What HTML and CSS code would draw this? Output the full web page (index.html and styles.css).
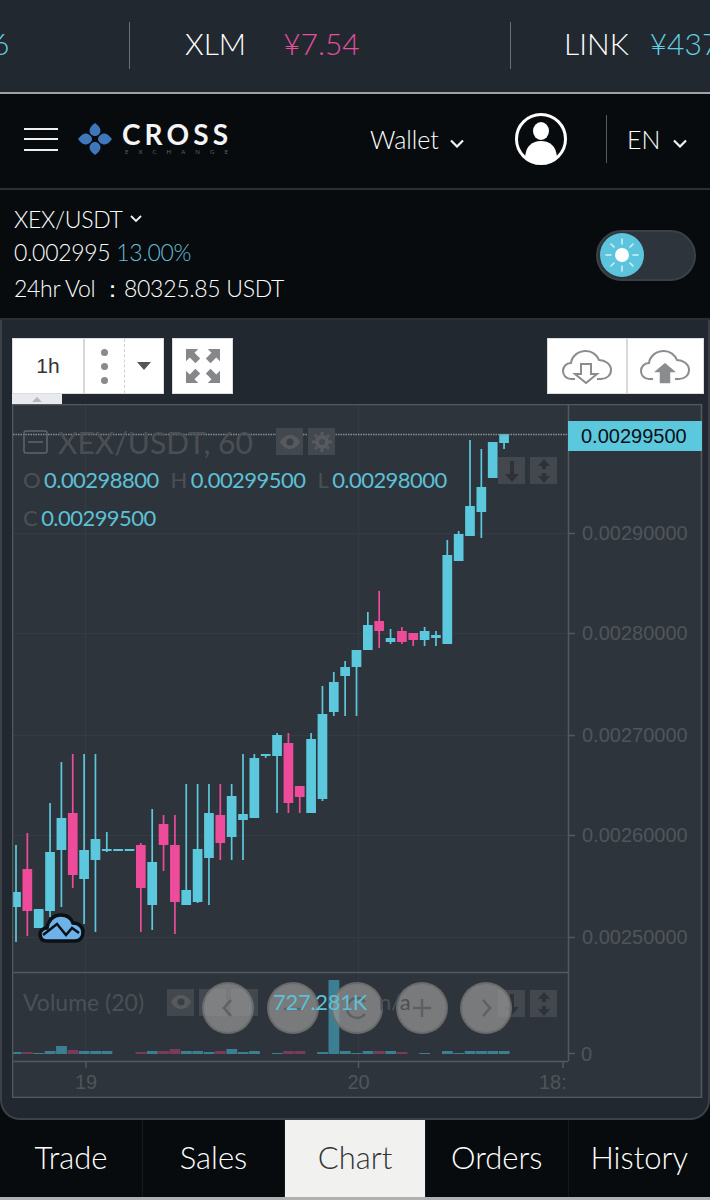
FILE: index.html
```html
<!DOCTYPE html>
<html lang="en">
<head>
    <meta charset="UTF-8">
    <meta name="viewport" content="width=device-width, initial-scale=1.0">
    <title>Cross Exchange - XEX/USDT Chart</title>
    <link rel="stylesheet" href="styles.css">
</head>
<body>

    <!-- Price ticker -->
    <div class="ticker">
        <div class="ticker-item ticker-first"><span class="up">6</span></div>
        <div class="ticker-item ticker-mid"><span class="coin">XLM</span><span class="down">¥7.54</span></div>
        <div class="ticker-item ticker-last"><span class="coin">LINK</span><span class="up">¥437</span></div>
    </div>

    <!-- Header -->
    <header class="header">
        <div class="hamburger"><span></span><span></span><span></span></div>
        <svg class="logo-mark" viewBox="0 0 34 32">
            <g fill="#3f78ba">
                <path d="M17 0c3 2.500 5.500 4.500 5.500 7.500S20 13 17 13s-5.500-2.500-5.500-5.500S14 2.500 17 0z"/>
                <path d="M17 32c3-2.500 5.500-4.500 5.500-7.500S20 19 17 19s-5.500 2.500-5.500 5.500S14 29.500 17 32z"/>
                <path d="M0 16c2.500-3 4.500-5.500 7.500-5.500S14 13 14 16s-3.500 5.500-6.500 5.500S2.500 19 0 16z"/>
                <path d="M34 16c-2.500-3-4.500-5.500-7.500-5.500S20 13 20 16s3.500 5.500 6.500 5.500S31.500 19 34 16z"/>
            </g>
        </svg>
        <div class="logo-text">
            <div class="logo-name">CROSS</div>
            <div class="logo-sub">EXCHANGE</div>
        </div>
        <div class="wallet">Wallet<svg class="chevron" viewBox="0 0 14 9"><path d="M1 1.500l6 6 6-6" /></svg></div>
        <svg class="avatar" viewBox="0 0 52 52">
            <circle cx="26" cy="26" r="24.500" fill="#070b0e" stroke="#fff" stroke-width="3"/>
            <ellipse cx="26" cy="18" rx="8" ry="9" fill="#fff"/>
            <path d="M10 44c1-11 7-16 16-16s15 5 16 16c-4 4-10 6.500-16 6.500s-12-2.500-16-6.500z" fill="#fff"/>
        </svg>
        <div class="lang">EN<svg class="chevron" viewBox="0 0 14 9"><path d="M1 1.500l6 6 6-6" /></svg></div>
    </header>

    <!-- Pair info -->
    <section class="pair">
        <div class="pair-info">
            <div class="pair-name">XEX/USDT<svg class="chevron-small" viewBox="0 0 12 8"><path d="M1 1l5 5 5-5" /></svg></div>
            <div class="pair-price">0.002995 <span class="pair-change">13.00%</span></div>
            <div class="pair-vol">24hr Vol ：80325.85 USDT</div>
        </div>
        <div class="toggle">
            <svg class="toggle-knob" viewBox="0 0 44 44">
                <circle cx="22" cy="22" r="22" fill="#5cc4dc"/>
                <circle cx="22" cy="22" r="7" fill="#fff"/>
                <g stroke="#d4f1f7" stroke-width="1.500" stroke-linecap="round">
                    <path d="M22 6v5M22 33v5M6 22h5M33 22h5M11 11l3 3M30 30l3 3M33 11l-3 3M14 30l-3 3"/>
                </g>
            </svg>
        </div>
    </section>

    <!-- Chart panel -->
    <main class="chart-panel">
        <div class="toolbar">
            <div class="tool-left">
                <div class="tool-group">
                    <div class="tool-cell cell-interval">1h</div>
                    <div class="tool-cell cell-dots"><span></span><span></span><span></span></div>
                    <div class="tool-cell cell-caret"><i></i></div>
                </div>
                <div class="tool-group">
                    <div class="tool-cell cell-full">
                        <svg viewBox="0 0 36 36" width="34" height="34" fill="#85878a">
                            <path d="M0 0h13l-4 4 6 6-5 5-6-6-4 4z"/>
                            <path d="M36 0v13l-4-4-6 6-5-5 6-6-4-4z"/>
                            <path d="M0 36v-13l4 4 6-6 5 5-6 6 4 4z"/>
                            <path d="M36 36h-13l4-4-6-6 5-5 6 6 4-4z"/>
                        </svg>
                    </div>
                </div>
            </div>
            <div class="tool-group">
                <div class="tool-cell cell-cloud">
                    <svg viewBox="0 0 50 34" width="50" height="34" fill="none" stroke="#8a8c8e" stroke-width="2">
                        <path d="M13 29H9C4 29 1 25 1 21c0-4 3-8 8-8 1-7 7-12 15-12 6 0 11 4 13 9 6 0 12 4 12 10 0 5-4 9-10 9h-4"/>
                        <path d="M19 14h10v10h6L24 33 13 24h6z" fill="#fff"/>
                    </svg>
                </div>
                <div class="tool-cell cell-cloud">
                    <svg viewBox="0 0 50 34" width="50" height="34" fill="none" stroke="#8a8c8e" stroke-width="2">
                        <path d="M13 29H9C4 29 1 25 1 21c0-4 3-8 8-8 1-7 7-12 15-12 6 0 11 4 13 9 6 0 12 4 12 10 0 5-4 9-10 9h-4"/>
                        <path d="M25 12l13 11h-7v11H19V23h-7z" fill="#8a8c8e" stroke="#fff" stroke-width="1.500"/>
                    </svg>
                </div>
            </div>
        </div>
        <div class="collapse-tab"><i></i></div>

        <div class="chart-frame">
            <svg class="chart-svg" id="chartSvg" viewBox="12 404 692 694" width="692" height="694"></svg>

            <!-- Legend over the main pane -->
            <div class="legend">
                <div class="legend-title">
                    <svg class="legend-box" viewBox="0 0 25 24" fill="none" stroke="#62666b" stroke-width="1.500">
                        <rect x="1" y="1" width="23" height="22" rx="2"/><path d="M5 12h15"/>
                    </svg>
                    <span class="legend-name">XEX/USDT, 60</span>
                    <span class="square"><svg viewBox="0 0 22 16" width="22" height="16"><path d="M1 8c3-5 6-7 10-7s7 2 10 7c-3 5-6 7-10 7S4 13 1 8z" fill="#565a5f"/><circle cx="11" cy="8" r="3.500" fill="#3a3f44"/></svg></span>
                    <span class="square"><svg viewBox="0 0 20 20" width="20" height="20" fill="none" stroke="#575b60" stroke-width="4"><circle cx="10" cy="10" r="5"/><path stroke-width="3" d="M10 0v3M10 17v3M0 10h3M17 10h3M3 3l2 2M15 15l2 2M17 3l-2 2M5 15l-2 2"/></svg></span>
                </div>
                <div class="legend-row">
                    <span class="key">O</span><span class="val">0.00298800</span>
                    <span class="key key-gap">H</span><span class="val">0.00299500</span>
                    <span class="key key-gap">L</span><span class="val">0.00298000</span>
                </div>
                <div class="legend-row">
                    <span class="key">C</span><span class="val">0.00299500</span>
                </div>
            </div>

            <div class="scale-btns scale-main">
                <span class="square"><svg viewBox="0 0 16 22" width="16" height="22" fill="#2e3238"><path d="M6 1h4v13h5l-7 8-7-8h5z"/></svg></span>
                <span class="square"><svg viewBox="0 0 16 24" width="16" height="24" fill="#2e3238"><path d="M8 0l6 7h-4v3H6V7H2zM8 24l-6-7h4v-3h4v3h4z"/></svg></span>
            </div>

            <!-- Volume legend and zoom buttons -->
            <div class="volume-legend">
                <span class="volume-name">Volume (20)</span>
                <span class="square"><svg viewBox="0 0 22 16" width="22" height="16"><path d="M1 8c3-5 6-7 10-7s7 2 10 7c-3 5-6 7-10 7S4 13 1 8z" fill="#565a5f"/><circle cx="11" cy="8" r="3.500" fill="#3a3f44"/></svg></span>
                <span class="square"></span>
                <span class="square"></span>
            </div>
            <div class="scale-btns scale-volume">
                <span class="square"><svg viewBox="0 0 16 22" width="16" height="22" fill="#2e3238"><path d="M6 1h4v13h5l-7 8-7-8h5z"/></svg></span>
                <span class="square"><svg viewBox="0 0 16 24" width="16" height="24" fill="#2e3238"><path d="M8 0l6 7h-4v3H6V7H2zM8 24l-6-7h4v-3h4v3h4z"/></svg></span>
            </div>
            <div class="zoom-btns">
                <span class="round"><svg viewBox="0 0 24 24" width="24" height="24"><path d="M15 4l-7 8 7 8"/></svg></span>
                <span class="round"><svg viewBox="0 0 24 24" width="24" height="24"><path d="M3 13h18"/></svg></span>
                <span class="round"><svg viewBox="0 0 24 24" width="24" height="24"><path d="M20 6A10 10 0 1 0 20 18"/></svg></span>
                <span class="round"><svg viewBox="0 0 24 24" width="24" height="24"><path d="M3 12h18M12 3v18"/></svg></span>
                <span class="round"><svg viewBox="0 0 24 24" width="24" height="24"><path d="M9 4l7 8-7 8"/></svg></span>
            </div>
            <div class="volume-values"><span class="val">727.281K</span><span class="key">n/a</span></div>
        </div>
    </main>

    <!-- Bottom tabs -->
    <nav class="tabs">
        <div class="tab tab-left">Trade</div>
        <div class="tab tab-left">Sales</div>
        <div class="tab active">Chart</div>
        <div class="tab">Orders</div>
        <div class="tab">History</div>
    </nav>

    <script src="chart.js"></script>
</body>
</html>
```

FILE: styles.css
```css
* {
    box-sizing: border-box;
}

html, body {
    width: 710px;
    height: 1200px;
    margin: 0;
    overflow: hidden;
    background-color: #070b0e;
    font-family: 'Lato', 'Liberation Sans', sans-serif;
    font-weight: 300;
    color: #fff;
}

body {
    display: flex;
    flex-direction: column;
}

/* Ticker */
.ticker {
    height: 94px;
    flex: none;
    display: flex;
    background-color: #22282f;
    border-bottom: 2px solid #9fa3a6;
    font-size: 30px;
    padding-top: 22px;
}

.ticker-item {
    height: 47px;
    display: flex;
    align-items: center;
    white-space: nowrap;
    overflow: hidden;
    padding-bottom: 5px;
}

.ticker-first {
    width: 130px;
    border-right: 1px solid #6a6f74;
}

.ticker-first .up {
    margin-left: -8px;
}

.ticker-mid {
    width: 381px;
    padding-left: 55px;
    border-right: 1px solid #6a6f74;
}

.ticker-last {
    flex: 1;
    padding-left: 53px;
}

.coin {
    margin-right: 37px;
}

.ticker-last .coin {
    margin-right: 21px;
}

.up {
    color: #62cde3;
}

.down {
    color: #e4509c;
}

/* Header */
.header {
    height: 96px;
    flex: none;
    display: flex;
    align-items: center;
    border-bottom: 2px solid #2a3036;
    padding-left: 24px;
    padding-bottom: 4px;
}

.hamburger {
    width: 34px;
    display: flex;
    flex-direction: column;
    gap: 8.500px;
    margin-right: 20px;
}

.hamburger span {
    height: 2px;
    background-color: #f0f0f0;
}

.logo-mark {
    width: 34px;
    height: 32px;
    margin-right: 10px;
}

.logo-text {
    width: 108px;
    margin-right: 140px;
}

.logo-name {
    font-size: 28px;
    font-weight: 700;
    line-height: 22px;
    letter-spacing: 4.100px;
    color: #f4f4f4;
}

.logo-sub {
    font-size: 6px;
    font-weight: 400;
    line-height: 8px;
    margin-top: 3px;
    letter-spacing: 10.100px;
    color: #5d6266;
    margin-left: 3px;
    white-space: nowrap;
}

.wallet {
    width: 145px;
    font-size: 25px;
    display: flex;
    align-items: center;
}

.chevron {
    width: 14px;
    height: 9px;
    margin-left: 11px;
    margin-top: 8px;
    fill: none;
    stroke: #f2f2f2;
    stroke-width: 2.200;
}

.avatar {
    width: 52px;
    height: 52px;
    margin-right: 39px;
}

.lang {
    height: 48px;
    flex: 1;
    border-left: 1px solid #555a5f;
    padding-left: 20px;
    font-size: 25px;
    display: flex;
    align-items: center;
}

.lang .chevron {
    margin-left: 13px;
}

/* Pair */
.pair {
    height: 130px;
    flex: none;
    display: flex;
    justify-content: space-between;
    align-items: center;
    padding: 0 14px;
    border-bottom: 2px solid #2a3036;
}

.pair-info {
    font-size: 23px;
    line-height: 34px;
    letter-spacing: -0.3px;
}

.pair-name {
    display: flex;
    align-items: center;
    height: 32px;
}

.chevron-small {
    width: 12px;
    height: 8px;
    margin-left: 8px;
    fill: none;
    stroke: #f2f2f2;
    stroke-width: 1.800;
}

.pair-change {
    color: #66bdd2;
}

.pair-vol {
    margin-top: 2px;
}

.toggle {
    width: 100px;
    height: 51px;
    margin-top: 2px;
    padding: 1px 2px;
    background-color: #2e343b;
    border: 2px solid #3a4047;
    border-radius: 26px;
}

.toggle-knob {
    display: block;
    width: 44px;
    height: 44px;
}

/* Chart panel */
.chart-panel {
    height: 800px;
    flex: none;
    padding: 18px 4px 0 10px;
    background-color: #22282f;
    border: 2px solid #3b4147;
    border-top: none;
    border-radius: 0 0 20px 20px;
}

.toolbar {
    height: 56px;
    display: flex;
    justify-content: space-between;
}

.tool-left {
    display: flex;
    gap: 8px;
}

.tool-group {
    display: flex;
    background-color: #fff;
    border: 1px solid #dcdcdc;
}

.tool-cell {
    display: flex;
    align-items: center;
    justify-content: center;
}

.cell-interval {
    width: 72px;
    border-right: 2px solid #d8d8d8;
    font-family: 'Liberation Sans', sans-serif;
    font-weight: 400;
    font-size: 21px;
    color: #333;
}

.cell-dots {
    width: 40px;
    flex-direction: column;
    gap: 7px;
    border-right: 1px dashed #cfcfcf;
}

.cell-dots span {
    width: 7px;
    height: 7px;
    border-radius: 50%;
    background-color: #8a8a8a;
}

.cell-caret {
    width: 38px;
}

.cell-caret i {
    border-left: 7px solid transparent;
    border-right: 7px solid transparent;
    border-top: 8px solid #555;
}

.cell-full {
    width: 59px;
}

.cell-cloud {
    width: 77.500px;
    padding-top: 2px;
}

.cell-cloud + .cell-cloud {
    border-left: 2px solid #d8d8d8;
}

.collapse-tab {
    width: 50px;
    height: 10px;
    background-color: #e8eaee;
    display: flex;
    align-items: center;
    justify-content: center;
}

.collapse-tab i {
    border-left: 5px solid transparent;
    border-right: 5px solid transparent;
    border-bottom: 5px solid #b5b8bd;
}

.chart-frame {
    position: relative;
    width: 692px;
    height: 694px;
}

.chart-svg {
    display: block;
}

.chart-svg text {
    font-family: 'Liberation Sans', sans-serif;
    font-weight: 400;
    font-size: 20px;
    fill: #50555a;
}

.chart-svg .last-price {
    fill: #0b1014;
}

/* Legend */
.legend {
    position: absolute;
    top: 24px;
    left: 11px;
    font-weight: 400;
}

.legend-title {
    display: flex;
    align-items: center;
    height: 27px;
}

.legend-box {
    width: 25px;
    height: 24px;
    margin-right: 10px;
}

.legend-name {
    width: 218px;
    font-size: 30px;
    font-weight: 400;
    color: #4b4f54;
    white-space: nowrap;
}

.legend-name + .square {
    margin-right: 5px;
}

.legend-row {
    display: flex;
    align-items: center;
    height: 38px;
    font-size: 22px;
    letter-spacing: -0.55px;
    white-space: nowrap;
}

.legend-title + .legend-row {
    margin-top: 5px;
}

.key {
    color: #4b5056;
    margin-right: 4px;
}

.key-gap {
    margin-left: 12px;
}

.val {
    color: #5cc0d6;
}

.square {
    width: 27px;
    height: 27px;
    display: flex;
    align-items: center;
    justify-content: center;
    background-color: #43484e;
    flex: none;
}

.scale-btns {
    position: absolute;
    left: 486px;
    display: flex;
    gap: 5px;
}

.scale-main {
    top: 53px;
}

.scale-volume {
    top: 586px;
}

.volume-legend {
    position: absolute;
    top: 584px;
    left: 11px;
    display: flex;
    align-items: center;
    gap: 5px;
    font-size: 23px;
    color: #4b5056;
}

.volume-name {
    width: 139px;
    font-weight: 400;
    white-space: nowrap;
}

.zoom-btns {
    position: absolute;
    top: 578px;
    left: 190px;
    display: flex;
    gap: 12.500px;
}

.round {
    width: 52px;
    height: 52px;
    display: flex;
    align-items: center;
    justify-content: center;
    border-radius: 50%;
    background-color: rgba(150, 150, 150, 0.72);
    border: 2px solid rgba(100, 100, 100, 0.7);
}

.round svg {
    fill: none;
    stroke: #5e6063;
    stroke-width: 2.500;
}

.volume-values {
    position: absolute;
    top: 584px;
    left: 261px;
    display: flex;
    gap: 12px;
    font-size: 22px;
    letter-spacing: -0.3px;
    font-weight: 400;
}

/* Tabs */
.tabs {
    height: 80px;
    flex: none;
    display: flex;
    border-bottom: 3px solid #aeb0b2;
}

.tab {
    flex: 1;
    display: flex;
    align-items: center;
    justify-content: center;
    padding-bottom: 4px;
    font-size: 31px;
    border-left: 1px solid #15191d;
}

.tab:first-child {
    border-left: none;
}

.tab-left {
    flex: none;
    width: 142px;
}

.tab.active {
    flex: none;
    width: 141px;
    background-color: #f1f1f0;
    color: #333;
}
```

FILE: chart.js
```js
// x step of one bar
const STEP = 11.35;
const START = 16;
const BODY_W = 9.7;
const WICK_W = 1.7;
const BLUE = '#5cc8de';
const PINK = '#ee4b9b';

// wick top, wick bottom, body top, body bottom, 1 = up (blue), 0 = down (pink)
const candles = [
    [845, 942, 892, 907, 1], [833, 936, 869, 911, 0], [909, 928, 909, 928, 1],
    [803, 917, 852, 911, 1], [762, 907, 818, 850, 1], [754, 888, 813, 875, 0],
    [754, 924, 850, 879, 1], [754, 932, 839, 860, 1], [832, 852, 849, 851, 1],
    [849, 851, 849, 851, 1], [849, 851, 849, 851, 1], [843, 932, 845, 888, 0],
    [809, 930, 862, 905, 1], [815, 871, 824, 845, 0], [815, 934, 845, 902, 0],
    [784, 905, 890, 905, 1], [784, 903, 849, 902, 1], [784, 905, 813, 858, 1],
    [784, 860, 815, 843, 0], [784, 860, 796, 837, 1], [754, 860, 814, 820, 1],
    [754, 818, 758, 818, 1], [754, 758, 754, 756, 1], [733, 813, 735, 756, 1],
    [733, 813, 743, 803, 0], [786, 813, 786, 797, 0], [733, 813, 739, 813, 1],
    [686, 801, 714, 799, 1], [672, 716, 682, 712, 1], [661, 716, 667, 676, 1],
    [650, 716, 650, 667, 1], [612, 650, 625, 650, 1], [591, 648, 621, 631, 0],
    [629, 644, 638, 642, 1], [627, 644, 631, 642, 0], [633, 646, 633, 640, 0],
    [627, 646, 631, 640, 1], [631, 646, 635, 638, 1], [540, 644, 555, 644, 1],
    [531, 561, 534, 561, 1], [440, 536, 506, 536, 1], [449, 538, 487, 512, 1],
    [442, 478, 442, 478, 1], [434, 449, 434, 443, 1]
];

// volume height per bar
const volumes = [2, 2, 1, 3, 8, 4, 3, 3, 3, 0, 0, 2, 3, 3, 5, 3, 3, 2, 3, 5, 2, 3, 0, 1,
    3, 3, 0, 2, 74, 3, 1, 3, 3, 3, 2, 0, 1, 0, 3, 1, 3, 3, 3, 3];

const priceLabels = [[533, '0.00290000'], [633, '0.00280000'], [735, '0.00270000'],
    [835, '0.00260000'], [937, '0.00250000']];

let svg = '';

function rect(x, y, w, h, fill) {
    svg += `<rect x="${x}" y="${y}" width="${w}" height="${h}" fill="${fill}"/>`;
}

function line(x1, y1, x2, y2, stroke, extra) {
    svg += `<line x1="${x1}" y1="${y1}" x2="${x2}" y2="${y2}" stroke="${stroke}" ${extra || ''}/>`;
}

function label(x, y, text, cls, anchor) {
    svg += `<text x="${x}" y="${y}" class="${cls || ''}" text-anchor="${anchor || 'start'}">${text}</text>`;
}

// background and grid
rect(12, 404, 690, 693, '#2e343b');
[85.5, 358.5].forEach(x => line(x, 405, x, 1061, '#353b42'));
priceLabels.forEach(p => line(13, p[0] + 0.5, 568, p[0] + 0.5, '#353b42'));

// volume bars
volumes.forEach((h, i) => {
    if (!h) return;
    const x = START + i * STEP - STEP / 2 + 0.4;
    rect(x.toFixed(1), 1054 - h, (STEP - 0.6).toFixed(1), h, candles[i][4] ? '#3d7f92' : '#7a3a5e');
});

// candles
candles.forEach((c, i) => {
    const x = START + i * STEP;
    const color = c[4] ? BLUE : PINK;
    rect((x - WICK_W / 2).toFixed(2), c[0], WICK_W, c[1] - c[0], color);
    rect((x - BODY_W / 2).toFixed(2), c[2], BODY_W, c[3] - c[2], color);
});

// frame and panes
const FRAME = '#54595e';
svg += `<rect x="12.5" y="404.5" width="689" height="693" fill="none" stroke="${FRAME}" stroke-width="1.500"/>`;
line(568.5, 405, 568.5, 1061, FRAME, 'stroke-width="1.500"');
line(13, 972.5, 568, 972.5, FRAME, 'stroke-width="1.500"');
line(13, 1061.5, 568, 1061.5, FRAME, 'stroke-width="1.500"');

// last price line, dotted
line(13, 434.5, 568, 434.5, '#7f9299', 'stroke-width="1.500" stroke-dasharray="1.500 1"');

// price axis
priceLabels.forEach(p => {
    line(568, p[0] + 0.5, 575, p[0] + 0.5, FRAME, 'stroke-width="1.500"');
    label(582, p[0] + 7, p[1]);
});
line(568, 1053.5, 575, 1053.5, FRAME, 'stroke-width="1.500"');
label(581, 1061, '0');

rect(568, 421, 134, 30, BLUE);
label(581, 443, '0.00299500', 'last-price');

// time axis
[[86, '19'], [358.5, '20']].forEach(t => {
    line(t[0], 1061, t[0], 1068, FRAME, 'stroke-width="1.500"');
    label(t[0], 1089, t[1], '', 'middle');
});
line(563, 1061, 563, 1068, FRAME, 'stroke-width="1.500"');
label(539, 1089, '18:');

// trade marker cloud
svg += '<path d="M47 941c-5 0-7-3-7-7 0-3 3-6 7-6 1-7 6-13 14-13 6 0 10 3 12 8 6 0 10 4 10 9 0 5-3 9-8 9z" fill="#6db3ea" stroke="#0b1014" stroke-width="3.500"/>';
svg += '<path d="M43 935l14-11 9 11 6-7 7 5" fill="none" stroke="#0b1014" stroke-width="2.500"/>';

document.getElementById('chartSvg').innerHTML = svg;
```
